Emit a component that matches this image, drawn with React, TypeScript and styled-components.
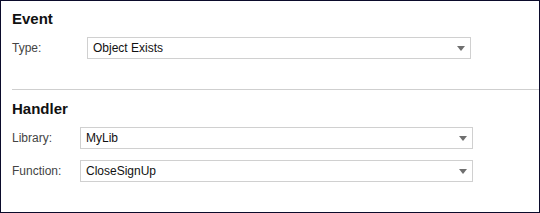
import React from "react";
import styled, { createGlobalStyle } from "styled-components";

const GlobalStyle = createGlobalStyle`
  html, body {
    margin: 0;
    padding: 0;
    background: #fff;
  }
  * {
    box-sizing: border-box;
  }
`;

const Panel = styled.div`
  width: 540px;
  height: 213px;
  border: 1px solid #0b0b2b;
  background: #fff;
  font-family: Arial, "Liberation Sans", sans-serif;
`;

const Section = styled.div<{ $top: number; $bottom?: number }>`
  display: flex;
  flex-direction: column;
  gap: 11px;
  padding: ${(p) => p.$top}px 0 ${(p) => p.$bottom ?? 0}px 11px;
`;

const Heading = styled.div`
  font-size: 15px;
  font-weight: bold;
  line-height: 17px;
  color: #111;
  margin-bottom: -1px;
`;

const Row = styled.div<{ $labelWidth: number }>`
  display: grid;
  grid-template-columns: ${(p) => p.$labelWidth}px 1fr;
  align-items: center;
`;

const Label = styled.label`
  font-size: 12px;
  color: #444;
`;

const Select = styled.div<{ $width: number }>`
  position: relative;
  width: ${(p) => p.$width}px;
  height: 22px;
  border: 1px solid #d0d0d0;
  background: #fff;
  font-size: 12px;
  line-height: 20px;
  color: #111;
  padding-left: 5px;
`;

const Arrow = styled.span`
  position: absolute;
  right: 5px;
  top: 8px;
  width: 0;
  height: 0;
  border-left: 4px solid transparent;
  border-right: 4px solid transparent;
  border-top: 5px solid #6f6f6f;
`;

const Divider = styled.hr`
  margin: 0 0 0 11px;
  border: none;
  border-top: 1px solid #cfcfcf;
  height: 0;
`;

const Field = ({
  label,
  value,
  labelWidth,
  width,
}: {
  label: string;
  value: string;
  labelWidth: number;
  width: number;
}) => (
  <Row $labelWidth={labelWidth}>
    <Label>{label}</Label>
    <Select $width={width}>
      {value}
      <Arrow />
    </Select>
  </Row>
);

const App = () => (
  <>
    <GlobalStyle />
    <Panel>
      <Section $top={9} $bottom={30}>
        <Heading>Event</Heading>
        <Field label="Type:" value="Object Exists" labelWidth={75} width={384} />
      </Section>
      <Divider />
      <Section $top={10}>
        <Heading>Handler</Heading>
        <Field label="Library:" value="MyLib" labelWidth={68} width={393} />
        <Field label="Function:" value="CloseSignUp" labelWidth={68} width={393} />
      </Section>
    </Panel>
  </>
);

export default App;
